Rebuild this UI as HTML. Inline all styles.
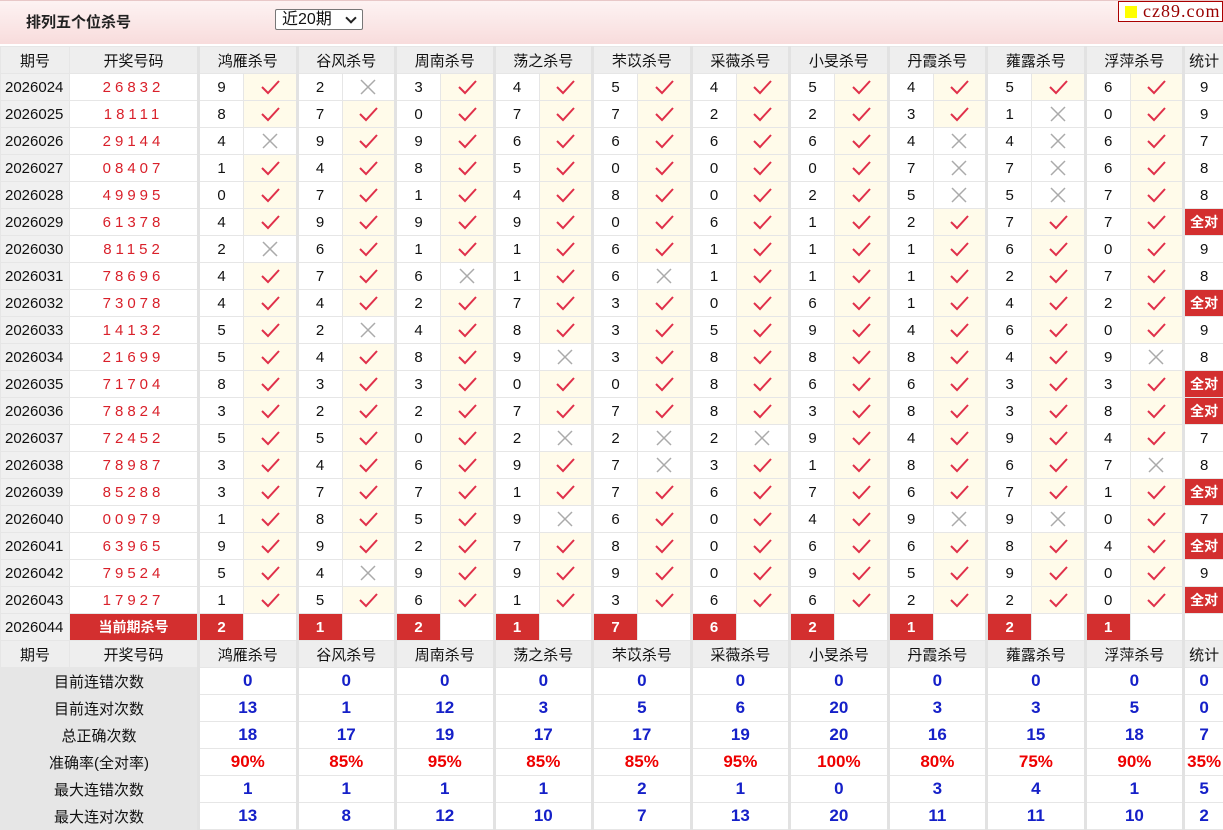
<!DOCTYPE html>
<html><head><meta charset="utf-8"><style>
body{margin:0;width:1223px;height:829px;overflow:hidden;background:#fff;font-family:"Liberation Sans","Noto Sans CJK SC",sans-serif;}
.top{position:absolute;left:0;top:0;width:1223px;height:44px;background:linear-gradient(#fdf3f3,#f8dcdc);border-top:1px solid #e8c8c8;box-sizing:border-box;}
.tt{position:absolute;left:26px;top:10px;font-size:15px;font-weight:bold;color:#222;}
.sel{position:absolute;left:275px;top:8px;width:88px;height:21px;border:1px solid #777;background:#fff;box-sizing:border-box;font-size:16px;line-height:19px;padding-left:6px;color:#111;border-radius:2px}
.sel b{position:absolute;right:7px;top:4px;width:6px;height:6px;border-right:2px solid #222;border-bottom:2px solid #222;transform:rotate(45deg)}
.logo{position:absolute;left:1118px;top:0;width:105px;height:21px;border:1px solid #a00;background:#fff;box-sizing:border-box;font-family:"Liberation Serif",serif;font-size:18px;color:#900;line-height:19px;padding-left:24px;letter-spacing:1px}
.logo i{position:absolute;left:6px;top:4px;width:12px;height:12px;background:#ff0}
table{position:absolute;left:0;top:46px;width:1223px;border-collapse:collapse;table-layout:fixed;}
td{border:1px solid #e6e6e6;padding:0;text-align:center;font-size:15px;height:26px;color:#111;overflow:hidden;white-space:nowrap}
tr{height:27px}
td.p{background:#f0f0f0;text-align:left;padding-left:4px;font-size:15px}
td.h{background:#eeeeee;font-size:15px;height:25px}
td.n{color:#d9202a;letter-spacing:4px;font-size:15px}
td.g{border-left:3px solid #e2e2e2}
td.y{background:#fffbea}
td.r{background:#d32f2f;color:#fff;font-weight:bold;font-size:15px}
td.q{background:#d32f2f;color:#fff;font-weight:bold;font-size:14px}
td.l{background:#e6e6e6;font-size:15px}
td.b{color:#1520c8;font-weight:bold;font-size:17px}
td.c{color:#e00;font-weight:bold;font-size:17px}
svg{display:block;margin:auto}
</style></head><body>
<svg width="0" height="0" style="position:absolute"><defs>
<g id="k"><path d="M3 9 L9 15 L20 3" fill="none" stroke="#e0304a" stroke-width="2"/></g>
<g id="x"><path d="M4 2 L18 16 M18 2 L4 16" fill="none" stroke="#aaa" stroke-width="1.5"/></g>
</defs></svg>
<div class="top"><div class="tt">排列五个位杀号</div><div class="sel">近20期<b></b></div><div class="logo"><i></i>cz89.com</div></div>
<table>
<colgroup><col style="width:69px"><col style="width:129px">
<col style="width:45px"><col style="width:53.5px"><col style="width:45px"><col style="width:53.5px"><col style="width:45px"><col style="width:53.5px"><col style="width:45px"><col style="width:53.5px"><col style="width:45px"><col style="width:53.5px"><col style="width:45px"><col style="width:53.5px"><col style="width:45px"><col style="width:53.5px"><col style="width:45px"><col style="width:53.5px"><col style="width:45px"><col style="width:53.5px"><col style="width:45px"><col style="width:53.5px"><col style="width:40px"></colgroup>
<tr><td class="h">期号</td><td class="h">开奖号码</td><td class="h g" colspan="2">鸿雁杀号</td><td class="h g" colspan="2">谷风杀号</td><td class="h g" colspan="2">周南杀号</td><td class="h g" colspan="2">荡之杀号</td><td class="h g" colspan="2">芣苡杀号</td><td class="h g" colspan="2">采薇杀号</td><td class="h g" colspan="2">小旻杀号</td><td class="h g" colspan="2">丹霞杀号</td><td class="h g" colspan="2">蕹露杀号</td><td class="h g" colspan="2">浮萍杀号</td><td class="h g">统计</td></tr>
<tr><td class="p">2026024</td><td class="n">26832</td><td class="g">9</td><td class="y"><svg width="22" height="18"><use href="#k"/></svg></td><td class="g">2</td><td><svg width="22" height="18"><use href="#x"/></svg></td><td class="g">3</td><td class="y"><svg width="22" height="18"><use href="#k"/></svg></td><td class="g">4</td><td class="y"><svg width="22" height="18"><use href="#k"/></svg></td><td class="g">5</td><td class="y"><svg width="22" height="18"><use href="#k"/></svg></td><td class="g">4</td><td class="y"><svg width="22" height="18"><use href="#k"/></svg></td><td class="g">5</td><td class="y"><svg width="22" height="18"><use href="#k"/></svg></td><td class="g">4</td><td class="y"><svg width="22" height="18"><use href="#k"/></svg></td><td class="g">5</td><td class="y"><svg width="22" height="18"><use href="#k"/></svg></td><td class="g">6</td><td class="y"><svg width="22" height="18"><use href="#k"/></svg></td><td class="g">9</td></tr>
<tr><td class="p">2026025</td><td class="n">18111</td><td class="g">8</td><td class="y"><svg width="22" height="18"><use href="#k"/></svg></td><td class="g">7</td><td class="y"><svg width="22" height="18"><use href="#k"/></svg></td><td class="g">0</td><td class="y"><svg width="22" height="18"><use href="#k"/></svg></td><td class="g">7</td><td class="y"><svg width="22" height="18"><use href="#k"/></svg></td><td class="g">7</td><td class="y"><svg width="22" height="18"><use href="#k"/></svg></td><td class="g">2</td><td class="y"><svg width="22" height="18"><use href="#k"/></svg></td><td class="g">2</td><td class="y"><svg width="22" height="18"><use href="#k"/></svg></td><td class="g">3</td><td class="y"><svg width="22" height="18"><use href="#k"/></svg></td><td class="g">1</td><td><svg width="22" height="18"><use href="#x"/></svg></td><td class="g">0</td><td class="y"><svg width="22" height="18"><use href="#k"/></svg></td><td class="g">9</td></tr>
<tr><td class="p">2026026</td><td class="n">29144</td><td class="g">4</td><td><svg width="22" height="18"><use href="#x"/></svg></td><td class="g">9</td><td class="y"><svg width="22" height="18"><use href="#k"/></svg></td><td class="g">9</td><td class="y"><svg width="22" height="18"><use href="#k"/></svg></td><td class="g">6</td><td class="y"><svg width="22" height="18"><use href="#k"/></svg></td><td class="g">6</td><td class="y"><svg width="22" height="18"><use href="#k"/></svg></td><td class="g">6</td><td class="y"><svg width="22" height="18"><use href="#k"/></svg></td><td class="g">6</td><td class="y"><svg width="22" height="18"><use href="#k"/></svg></td><td class="g">4</td><td><svg width="22" height="18"><use href="#x"/></svg></td><td class="g">4</td><td><svg width="22" height="18"><use href="#x"/></svg></td><td class="g">6</td><td class="y"><svg width="22" height="18"><use href="#k"/></svg></td><td class="g">7</td></tr>
<tr><td class="p">2026027</td><td class="n">08407</td><td class="g">1</td><td class="y"><svg width="22" height="18"><use href="#k"/></svg></td><td class="g">4</td><td class="y"><svg width="22" height="18"><use href="#k"/></svg></td><td class="g">8</td><td class="y"><svg width="22" height="18"><use href="#k"/></svg></td><td class="g">5</td><td class="y"><svg width="22" height="18"><use href="#k"/></svg></td><td class="g">0</td><td class="y"><svg width="22" height="18"><use href="#k"/></svg></td><td class="g">0</td><td class="y"><svg width="22" height="18"><use href="#k"/></svg></td><td class="g">0</td><td class="y"><svg width="22" height="18"><use href="#k"/></svg></td><td class="g">7</td><td><svg width="22" height="18"><use href="#x"/></svg></td><td class="g">7</td><td><svg width="22" height="18"><use href="#x"/></svg></td><td class="g">6</td><td class="y"><svg width="22" height="18"><use href="#k"/></svg></td><td class="g">8</td></tr>
<tr><td class="p">2026028</td><td class="n">49995</td><td class="g">0</td><td class="y"><svg width="22" height="18"><use href="#k"/></svg></td><td class="g">7</td><td class="y"><svg width="22" height="18"><use href="#k"/></svg></td><td class="g">1</td><td class="y"><svg width="22" height="18"><use href="#k"/></svg></td><td class="g">4</td><td class="y"><svg width="22" height="18"><use href="#k"/></svg></td><td class="g">8</td><td class="y"><svg width="22" height="18"><use href="#k"/></svg></td><td class="g">0</td><td class="y"><svg width="22" height="18"><use href="#k"/></svg></td><td class="g">2</td><td class="y"><svg width="22" height="18"><use href="#k"/></svg></td><td class="g">5</td><td><svg width="22" height="18"><use href="#x"/></svg></td><td class="g">5</td><td><svg width="22" height="18"><use href="#x"/></svg></td><td class="g">7</td><td class="y"><svg width="22" height="18"><use href="#k"/></svg></td><td class="g">8</td></tr>
<tr><td class="p">2026029</td><td class="n">61378</td><td class="g">4</td><td class="y"><svg width="22" height="18"><use href="#k"/></svg></td><td class="g">9</td><td class="y"><svg width="22" height="18"><use href="#k"/></svg></td><td class="g">9</td><td class="y"><svg width="22" height="18"><use href="#k"/></svg></td><td class="g">9</td><td class="y"><svg width="22" height="18"><use href="#k"/></svg></td><td class="g">0</td><td class="y"><svg width="22" height="18"><use href="#k"/></svg></td><td class="g">6</td><td class="y"><svg width="22" height="18"><use href="#k"/></svg></td><td class="g">1</td><td class="y"><svg width="22" height="18"><use href="#k"/></svg></td><td class="g">2</td><td class="y"><svg width="22" height="18"><use href="#k"/></svg></td><td class="g">7</td><td class="y"><svg width="22" height="18"><use href="#k"/></svg></td><td class="g">7</td><td class="y"><svg width="22" height="18"><use href="#k"/></svg></td><td class="q g">全对</td></tr>
<tr><td class="p">2026030</td><td class="n">81152</td><td class="g">2</td><td><svg width="22" height="18"><use href="#x"/></svg></td><td class="g">6</td><td class="y"><svg width="22" height="18"><use href="#k"/></svg></td><td class="g">1</td><td class="y"><svg width="22" height="18"><use href="#k"/></svg></td><td class="g">1</td><td class="y"><svg width="22" height="18"><use href="#k"/></svg></td><td class="g">6</td><td class="y"><svg width="22" height="18"><use href="#k"/></svg></td><td class="g">1</td><td class="y"><svg width="22" height="18"><use href="#k"/></svg></td><td class="g">1</td><td class="y"><svg width="22" height="18"><use href="#k"/></svg></td><td class="g">1</td><td class="y"><svg width="22" height="18"><use href="#k"/></svg></td><td class="g">6</td><td class="y"><svg width="22" height="18"><use href="#k"/></svg></td><td class="g">0</td><td class="y"><svg width="22" height="18"><use href="#k"/></svg></td><td class="g">9</td></tr>
<tr><td class="p">2026031</td><td class="n">78696</td><td class="g">4</td><td class="y"><svg width="22" height="18"><use href="#k"/></svg></td><td class="g">7</td><td class="y"><svg width="22" height="18"><use href="#k"/></svg></td><td class="g">6</td><td><svg width="22" height="18"><use href="#x"/></svg></td><td class="g">1</td><td class="y"><svg width="22" height="18"><use href="#k"/></svg></td><td class="g">6</td><td><svg width="22" height="18"><use href="#x"/></svg></td><td class="g">1</td><td class="y"><svg width="22" height="18"><use href="#k"/></svg></td><td class="g">1</td><td class="y"><svg width="22" height="18"><use href="#k"/></svg></td><td class="g">1</td><td class="y"><svg width="22" height="18"><use href="#k"/></svg></td><td class="g">2</td><td class="y"><svg width="22" height="18"><use href="#k"/></svg></td><td class="g">7</td><td class="y"><svg width="22" height="18"><use href="#k"/></svg></td><td class="g">8</td></tr>
<tr><td class="p">2026032</td><td class="n">73078</td><td class="g">4</td><td class="y"><svg width="22" height="18"><use href="#k"/></svg></td><td class="g">4</td><td class="y"><svg width="22" height="18"><use href="#k"/></svg></td><td class="g">2</td><td class="y"><svg width="22" height="18"><use href="#k"/></svg></td><td class="g">7</td><td class="y"><svg width="22" height="18"><use href="#k"/></svg></td><td class="g">3</td><td class="y"><svg width="22" height="18"><use href="#k"/></svg></td><td class="g">0</td><td class="y"><svg width="22" height="18"><use href="#k"/></svg></td><td class="g">6</td><td class="y"><svg width="22" height="18"><use href="#k"/></svg></td><td class="g">1</td><td class="y"><svg width="22" height="18"><use href="#k"/></svg></td><td class="g">4</td><td class="y"><svg width="22" height="18"><use href="#k"/></svg></td><td class="g">2</td><td class="y"><svg width="22" height="18"><use href="#k"/></svg></td><td class="q g">全对</td></tr>
<tr><td class="p">2026033</td><td class="n">14132</td><td class="g">5</td><td class="y"><svg width="22" height="18"><use href="#k"/></svg></td><td class="g">2</td><td><svg width="22" height="18"><use href="#x"/></svg></td><td class="g">4</td><td class="y"><svg width="22" height="18"><use href="#k"/></svg></td><td class="g">8</td><td class="y"><svg width="22" height="18"><use href="#k"/></svg></td><td class="g">3</td><td class="y"><svg width="22" height="18"><use href="#k"/></svg></td><td class="g">5</td><td class="y"><svg width="22" height="18"><use href="#k"/></svg></td><td class="g">9</td><td class="y"><svg width="22" height="18"><use href="#k"/></svg></td><td class="g">4</td><td class="y"><svg width="22" height="18"><use href="#k"/></svg></td><td class="g">6</td><td class="y"><svg width="22" height="18"><use href="#k"/></svg></td><td class="g">0</td><td class="y"><svg width="22" height="18"><use href="#k"/></svg></td><td class="g">9</td></tr>
<tr><td class="p">2026034</td><td class="n">21699</td><td class="g">5</td><td class="y"><svg width="22" height="18"><use href="#k"/></svg></td><td class="g">4</td><td class="y"><svg width="22" height="18"><use href="#k"/></svg></td><td class="g">8</td><td class="y"><svg width="22" height="18"><use href="#k"/></svg></td><td class="g">9</td><td><svg width="22" height="18"><use href="#x"/></svg></td><td class="g">3</td><td class="y"><svg width="22" height="18"><use href="#k"/></svg></td><td class="g">8</td><td class="y"><svg width="22" height="18"><use href="#k"/></svg></td><td class="g">8</td><td class="y"><svg width="22" height="18"><use href="#k"/></svg></td><td class="g">8</td><td class="y"><svg width="22" height="18"><use href="#k"/></svg></td><td class="g">4</td><td class="y"><svg width="22" height="18"><use href="#k"/></svg></td><td class="g">9</td><td><svg width="22" height="18"><use href="#x"/></svg></td><td class="g">8</td></tr>
<tr><td class="p">2026035</td><td class="n">71704</td><td class="g">8</td><td class="y"><svg width="22" height="18"><use href="#k"/></svg></td><td class="g">3</td><td class="y"><svg width="22" height="18"><use href="#k"/></svg></td><td class="g">3</td><td class="y"><svg width="22" height="18"><use href="#k"/></svg></td><td class="g">0</td><td class="y"><svg width="22" height="18"><use href="#k"/></svg></td><td class="g">0</td><td class="y"><svg width="22" height="18"><use href="#k"/></svg></td><td class="g">8</td><td class="y"><svg width="22" height="18"><use href="#k"/></svg></td><td class="g">6</td><td class="y"><svg width="22" height="18"><use href="#k"/></svg></td><td class="g">6</td><td class="y"><svg width="22" height="18"><use href="#k"/></svg></td><td class="g">3</td><td class="y"><svg width="22" height="18"><use href="#k"/></svg></td><td class="g">3</td><td class="y"><svg width="22" height="18"><use href="#k"/></svg></td><td class="q g">全对</td></tr>
<tr><td class="p">2026036</td><td class="n">78824</td><td class="g">3</td><td class="y"><svg width="22" height="18"><use href="#k"/></svg></td><td class="g">2</td><td class="y"><svg width="22" height="18"><use href="#k"/></svg></td><td class="g">2</td><td class="y"><svg width="22" height="18"><use href="#k"/></svg></td><td class="g">7</td><td class="y"><svg width="22" height="18"><use href="#k"/></svg></td><td class="g">7</td><td class="y"><svg width="22" height="18"><use href="#k"/></svg></td><td class="g">8</td><td class="y"><svg width="22" height="18"><use href="#k"/></svg></td><td class="g">3</td><td class="y"><svg width="22" height="18"><use href="#k"/></svg></td><td class="g">8</td><td class="y"><svg width="22" height="18"><use href="#k"/></svg></td><td class="g">3</td><td class="y"><svg width="22" height="18"><use href="#k"/></svg></td><td class="g">8</td><td class="y"><svg width="22" height="18"><use href="#k"/></svg></td><td class="q g">全对</td></tr>
<tr><td class="p">2026037</td><td class="n">72452</td><td class="g">5</td><td class="y"><svg width="22" height="18"><use href="#k"/></svg></td><td class="g">5</td><td class="y"><svg width="22" height="18"><use href="#k"/></svg></td><td class="g">0</td><td class="y"><svg width="22" height="18"><use href="#k"/></svg></td><td class="g">2</td><td><svg width="22" height="18"><use href="#x"/></svg></td><td class="g">2</td><td><svg width="22" height="18"><use href="#x"/></svg></td><td class="g">2</td><td><svg width="22" height="18"><use href="#x"/></svg></td><td class="g">9</td><td class="y"><svg width="22" height="18"><use href="#k"/></svg></td><td class="g">4</td><td class="y"><svg width="22" height="18"><use href="#k"/></svg></td><td class="g">9</td><td class="y"><svg width="22" height="18"><use href="#k"/></svg></td><td class="g">4</td><td class="y"><svg width="22" height="18"><use href="#k"/></svg></td><td class="g">7</td></tr>
<tr><td class="p">2026038</td><td class="n">78987</td><td class="g">3</td><td class="y"><svg width="22" height="18"><use href="#k"/></svg></td><td class="g">4</td><td class="y"><svg width="22" height="18"><use href="#k"/></svg></td><td class="g">6</td><td class="y"><svg width="22" height="18"><use href="#k"/></svg></td><td class="g">9</td><td class="y"><svg width="22" height="18"><use href="#k"/></svg></td><td class="g">7</td><td><svg width="22" height="18"><use href="#x"/></svg></td><td class="g">3</td><td class="y"><svg width="22" height="18"><use href="#k"/></svg></td><td class="g">1</td><td class="y"><svg width="22" height="18"><use href="#k"/></svg></td><td class="g">8</td><td class="y"><svg width="22" height="18"><use href="#k"/></svg></td><td class="g">6</td><td class="y"><svg width="22" height="18"><use href="#k"/></svg></td><td class="g">7</td><td><svg width="22" height="18"><use href="#x"/></svg></td><td class="g">8</td></tr>
<tr><td class="p">2026039</td><td class="n">85288</td><td class="g">3</td><td class="y"><svg width="22" height="18"><use href="#k"/></svg></td><td class="g">7</td><td class="y"><svg width="22" height="18"><use href="#k"/></svg></td><td class="g">7</td><td class="y"><svg width="22" height="18"><use href="#k"/></svg></td><td class="g">1</td><td class="y"><svg width="22" height="18"><use href="#k"/></svg></td><td class="g">7</td><td class="y"><svg width="22" height="18"><use href="#k"/></svg></td><td class="g">6</td><td class="y"><svg width="22" height="18"><use href="#k"/></svg></td><td class="g">7</td><td class="y"><svg width="22" height="18"><use href="#k"/></svg></td><td class="g">6</td><td class="y"><svg width="22" height="18"><use href="#k"/></svg></td><td class="g">7</td><td class="y"><svg width="22" height="18"><use href="#k"/></svg></td><td class="g">1</td><td class="y"><svg width="22" height="18"><use href="#k"/></svg></td><td class="q g">全对</td></tr>
<tr><td class="p">2026040</td><td class="n">00979</td><td class="g">1</td><td class="y"><svg width="22" height="18"><use href="#k"/></svg></td><td class="g">8</td><td class="y"><svg width="22" height="18"><use href="#k"/></svg></td><td class="g">5</td><td class="y"><svg width="22" height="18"><use href="#k"/></svg></td><td class="g">9</td><td><svg width="22" height="18"><use href="#x"/></svg></td><td class="g">6</td><td class="y"><svg width="22" height="18"><use href="#k"/></svg></td><td class="g">0</td><td class="y"><svg width="22" height="18"><use href="#k"/></svg></td><td class="g">4</td><td class="y"><svg width="22" height="18"><use href="#k"/></svg></td><td class="g">9</td><td><svg width="22" height="18"><use href="#x"/></svg></td><td class="g">9</td><td><svg width="22" height="18"><use href="#x"/></svg></td><td class="g">0</td><td class="y"><svg width="22" height="18"><use href="#k"/></svg></td><td class="g">7</td></tr>
<tr><td class="p">2026041</td><td class="n">63965</td><td class="g">9</td><td class="y"><svg width="22" height="18"><use href="#k"/></svg></td><td class="g">9</td><td class="y"><svg width="22" height="18"><use href="#k"/></svg></td><td class="g">2</td><td class="y"><svg width="22" height="18"><use href="#k"/></svg></td><td class="g">7</td><td class="y"><svg width="22" height="18"><use href="#k"/></svg></td><td class="g">8</td><td class="y"><svg width="22" height="18"><use href="#k"/></svg></td><td class="g">0</td><td class="y"><svg width="22" height="18"><use href="#k"/></svg></td><td class="g">6</td><td class="y"><svg width="22" height="18"><use href="#k"/></svg></td><td class="g">6</td><td class="y"><svg width="22" height="18"><use href="#k"/></svg></td><td class="g">8</td><td class="y"><svg width="22" height="18"><use href="#k"/></svg></td><td class="g">4</td><td class="y"><svg width="22" height="18"><use href="#k"/></svg></td><td class="q g">全对</td></tr>
<tr><td class="p">2026042</td><td class="n">79524</td><td class="g">5</td><td class="y"><svg width="22" height="18"><use href="#k"/></svg></td><td class="g">4</td><td><svg width="22" height="18"><use href="#x"/></svg></td><td class="g">9</td><td class="y"><svg width="22" height="18"><use href="#k"/></svg></td><td class="g">9</td><td class="y"><svg width="22" height="18"><use href="#k"/></svg></td><td class="g">9</td><td class="y"><svg width="22" height="18"><use href="#k"/></svg></td><td class="g">0</td><td class="y"><svg width="22" height="18"><use href="#k"/></svg></td><td class="g">9</td><td class="y"><svg width="22" height="18"><use href="#k"/></svg></td><td class="g">5</td><td class="y"><svg width="22" height="18"><use href="#k"/></svg></td><td class="g">9</td><td class="y"><svg width="22" height="18"><use href="#k"/></svg></td><td class="g">0</td><td class="y"><svg width="22" height="18"><use href="#k"/></svg></td><td class="g">9</td></tr>
<tr><td class="p">2026043</td><td class="n">17927</td><td class="g">1</td><td class="y"><svg width="22" height="18"><use href="#k"/></svg></td><td class="g">5</td><td class="y"><svg width="22" height="18"><use href="#k"/></svg></td><td class="g">6</td><td class="y"><svg width="22" height="18"><use href="#k"/></svg></td><td class="g">1</td><td class="y"><svg width="22" height="18"><use href="#k"/></svg></td><td class="g">3</td><td class="y"><svg width="22" height="18"><use href="#k"/></svg></td><td class="g">6</td><td class="y"><svg width="22" height="18"><use href="#k"/></svg></td><td class="g">6</td><td class="y"><svg width="22" height="18"><use href="#k"/></svg></td><td class="g">2</td><td class="y"><svg width="22" height="18"><use href="#k"/></svg></td><td class="g">2</td><td class="y"><svg width="22" height="18"><use href="#k"/></svg></td><td class="g">0</td><td class="y"><svg width="22" height="18"><use href="#k"/></svg></td><td class="q g">全对</td></tr>
<tr><td class="p">2026044</td><td class="q">当前期杀号</td><td class="r g">2</td><td></td><td class="r g">1</td><td></td><td class="r g">2</td><td></td><td class="r g">1</td><td></td><td class="r g">7</td><td></td><td class="r g">6</td><td></td><td class="r g">2</td><td></td><td class="r g">1</td><td></td><td class="r g">2</td><td></td><td class="r g">1</td><td></td><td class="g"></td></tr>
<tr><td class="h">期号</td><td class="h">开奖号码</td><td class="h g" colspan="2">鸿雁杀号</td><td class="h g" colspan="2">谷风杀号</td><td class="h g" colspan="2">周南杀号</td><td class="h g" colspan="2">荡之杀号</td><td class="h g" colspan="2">芣苡杀号</td><td class="h g" colspan="2">采薇杀号</td><td class="h g" colspan="2">小旻杀号</td><td class="h g" colspan="2">丹霞杀号</td><td class="h g" colspan="2">蕹露杀号</td><td class="h g" colspan="2">浮萍杀号</td><td class="h g">统计</td></tr>
<tr><td class="l" colspan="2">目前连错次数</td><td class="b g" colspan="2">0</td><td class="b g" colspan="2">0</td><td class="b g" colspan="2">0</td><td class="b g" colspan="2">0</td><td class="b g" colspan="2">0</td><td class="b g" colspan="2">0</td><td class="b g" colspan="2">0</td><td class="b g" colspan="2">0</td><td class="b g" colspan="2">0</td><td class="b g" colspan="2">0</td><td class="b g">0</td></tr>
<tr><td class="l" colspan="2">目前连对次数</td><td class="b g" colspan="2">13</td><td class="b g" colspan="2">1</td><td class="b g" colspan="2">12</td><td class="b g" colspan="2">3</td><td class="b g" colspan="2">5</td><td class="b g" colspan="2">6</td><td class="b g" colspan="2">20</td><td class="b g" colspan="2">3</td><td class="b g" colspan="2">3</td><td class="b g" colspan="2">5</td><td class="b g">0</td></tr>
<tr><td class="l" colspan="2">总正确次数</td><td class="b g" colspan="2">18</td><td class="b g" colspan="2">17</td><td class="b g" colspan="2">19</td><td class="b g" colspan="2">17</td><td class="b g" colspan="2">17</td><td class="b g" colspan="2">19</td><td class="b g" colspan="2">20</td><td class="b g" colspan="2">16</td><td class="b g" colspan="2">15</td><td class="b g" colspan="2">18</td><td class="b g">7</td></tr>
<tr><td class="l" colspan="2">准确率(全对率)</td><td class="c g" colspan="2">90%</td><td class="c g" colspan="2">85%</td><td class="c g" colspan="2">95%</td><td class="c g" colspan="2">85%</td><td class="c g" colspan="2">85%</td><td class="c g" colspan="2">95%</td><td class="c g" colspan="2">100%</td><td class="c g" colspan="2">80%</td><td class="c g" colspan="2">75%</td><td class="c g" colspan="2">90%</td><td class="c g">35%</td></tr>
<tr><td class="l" colspan="2">最大连错次数</td><td class="b g" colspan="2">1</td><td class="b g" colspan="2">1</td><td class="b g" colspan="2">1</td><td class="b g" colspan="2">1</td><td class="b g" colspan="2">2</td><td class="b g" colspan="2">1</td><td class="b g" colspan="2">0</td><td class="b g" colspan="2">3</td><td class="b g" colspan="2">4</td><td class="b g" colspan="2">1</td><td class="b g">5</td></tr>
<tr><td class="l" colspan="2">最大连对次数</td><td class="b g" colspan="2">13</td><td class="b g" colspan="2">8</td><td class="b g" colspan="2">12</td><td class="b g" colspan="2">10</td><td class="b g" colspan="2">7</td><td class="b g" colspan="2">13</td><td class="b g" colspan="2">20</td><td class="b g" colspan="2">11</td><td class="b g" colspan="2">11</td><td class="b g" colspan="2">10</td><td class="b g">2</td></tr>
</table>
</body></html>
